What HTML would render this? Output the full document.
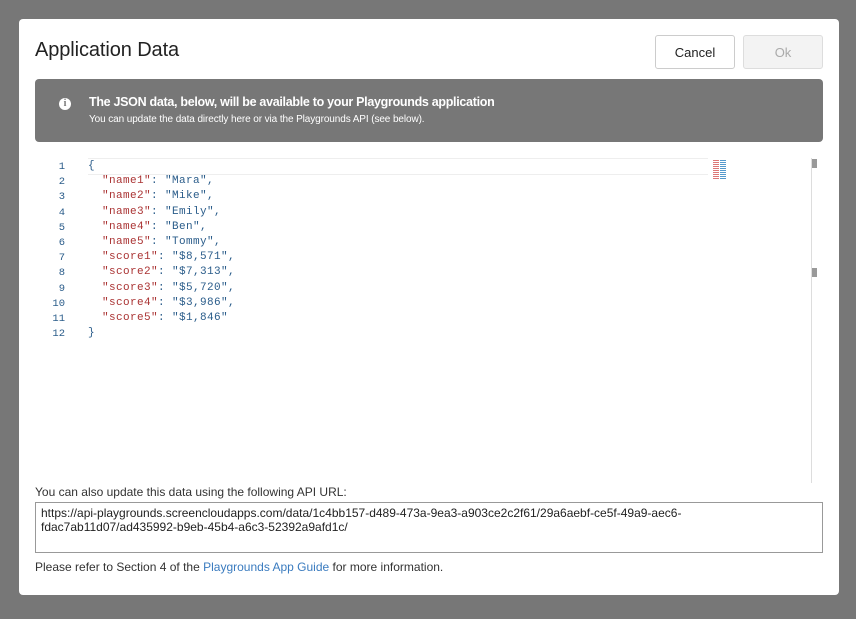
<!DOCTYPE html>
<html><head><style>
body{margin:0;width:856px;height:619px;background:#777;font-family:"Liberation Sans",sans-serif;overflow:hidden;position:relative}
.m{position:absolute;left:19px;top:19px;width:820px;height:576px;background:#fff;border-radius:4px}
h1{position:absolute;left:16px;top:20px;margin:0;font-size:20px;font-weight:normal;color:#222;letter-spacing:-0.1px}
.btn{position:absolute;top:16px;height:34px;border:1px solid #ccc;border-radius:3px;font-size:13px;display:flex;align-items:center;justify-content:center;box-sizing:border-box}
.ban{position:absolute;left:16px;top:60px;width:788px;height:63px;background:#777;border-radius:4px;color:#fff}
.ban .t{position:absolute;left:54px;top:16px;font-size:12.5px;font-weight:bold;letter-spacing:-0.3px}
.ban .s{position:absolute;left:54px;top:35px;font-size:10px;letter-spacing:-0.1px}
.ic{position:absolute;left:24px;top:19px;width:12px;height:12px;border-radius:50%;background:#fff;color:#777;font-size:10px;font-weight:bold;text-align:center;line-height:12px;font-family:"Liberation Serif",serif}
.code{position:absolute;left:0;top:140px;font-family:"Liberation Mono",monospace;font-size:11px;letter-spacing:0.4px}
.ln{position:absolute;width:46px;text-align:right;color:#2a5c8a;font-size:10.5px;letter-spacing:0}
.cl{position:absolute;left:69px;white-space:pre;color:#2a5c8a}
.k{color:#a33}
p{margin:0;position:absolute;left:16px;font-size:12px;color:#333}
.ta{position:absolute;left:16px;top:483px;width:788px;height:51px;border:1px solid #999;box-sizing:border-box;font-size:12px;color:#222;padding:3px 5px;line-height:14px;white-space:nowrap}
</style></head><body>
<div class="m">
<h1>Application Data</h1>
<div class="btn" style="left:636px;width:80px;color:#222">Cancel</div>
<div class="btn" style="left:724px;width:80px;background:#f3f3f3;color:#aaa;border-color:#ddd">Ok</div>
<div class="ban"><div class="ic">i</div><div class="t">The JSON data, below, will be available to your Playgrounds application</div><div class="s">You can update the data directly here or via the Playgrounds API (see below).</div></div>
<div style="position:absolute;left:69px;top:139px;width:620px;height:15px;border-top:1px solid #eee;border-bottom:1px solid #eee"></div>
<div style="position:absolute;left:792px;top:139px;width:1px;height:325px;background:#ddd"></div>
<div style="position:absolute;left:793px;top:140px;width:5px;height:9px;background:#999"></div>
<div style="position:absolute;left:793px;top:249px;width:5px;height:9px;background:#999"></div>
<div style="position:absolute;left:694px;top:141px;width:6px;height:20px;background:repeating-linear-gradient(#d77 0 1px,#fff 1px 2px)"></div>
<div style="position:absolute;left:701px;top:141px;width:6px;height:20px;background:repeating-linear-gradient(#59c 0 1px,#fff 1px 2px)"></div>
<div class="code">
<div class="ln" style="top:2px">1</div><div class="cl" style="top:1px">{</div>
<div class="ln" style="top:17px">2</div><div class="cl" style="top:16px">  <span class="k">"name1"</span>: "Mara",</div>
<div class="ln" style="top:32px">3</div><div class="cl" style="top:31px">  <span class="k">"name2"</span>: "Mike",</div>
<div class="ln" style="top:48px">4</div><div class="cl" style="top:47px">  <span class="k">"name3"</span>: "Emily",</div>
<div class="ln" style="top:63px">5</div><div class="cl" style="top:62px">  <span class="k">"name4"</span>: "Ben",</div>
<div class="ln" style="top:78px">6</div><div class="cl" style="top:77px">  <span class="k">"name5"</span>: "Tommy",</div>
<div class="ln" style="top:93px">7</div><div class="cl" style="top:92px">  <span class="k">"score1"</span>: "$8,571",</div>
<div class="ln" style="top:108px">8</div><div class="cl" style="top:107px">  <span class="k">"score2"</span>: "$7,313",</div>
<div class="ln" style="top:124px">9</div><div class="cl" style="top:123px">  <span class="k">"score3"</span>: "$5,720",</div>
<div class="ln" style="top:139px">10</div><div class="cl" style="top:138px">  <span class="k">"score4"</span>: "$3,986",</div>
<div class="ln" style="top:154px">11</div><div class="cl" style="top:153px">  <span class="k">"score5"</span>: "$1,846"</div>
<div class="ln" style="top:169px">12</div><div class="cl" style="top:168px">}</div>
</div>
<p style="top:466px">You can also update this data using the following API URL:</p>
<div class="ta">https://api-playgrounds.screencloudapps.com/data/1c4bb157-d489-473a-9ea3-a903ce2c2f61/29a6aebf-ce5f-49a9-aec6-<br>fdac7ab11d07/ad435992-b9eb-45b4-a6c3-52392a9afd1c/</div>
<p style="top:541px">Please refer to Section 4 of the <span style="color:#3a7bbf">Playgrounds App Guide</span> for more information.</p>
</div>
</body></html>
